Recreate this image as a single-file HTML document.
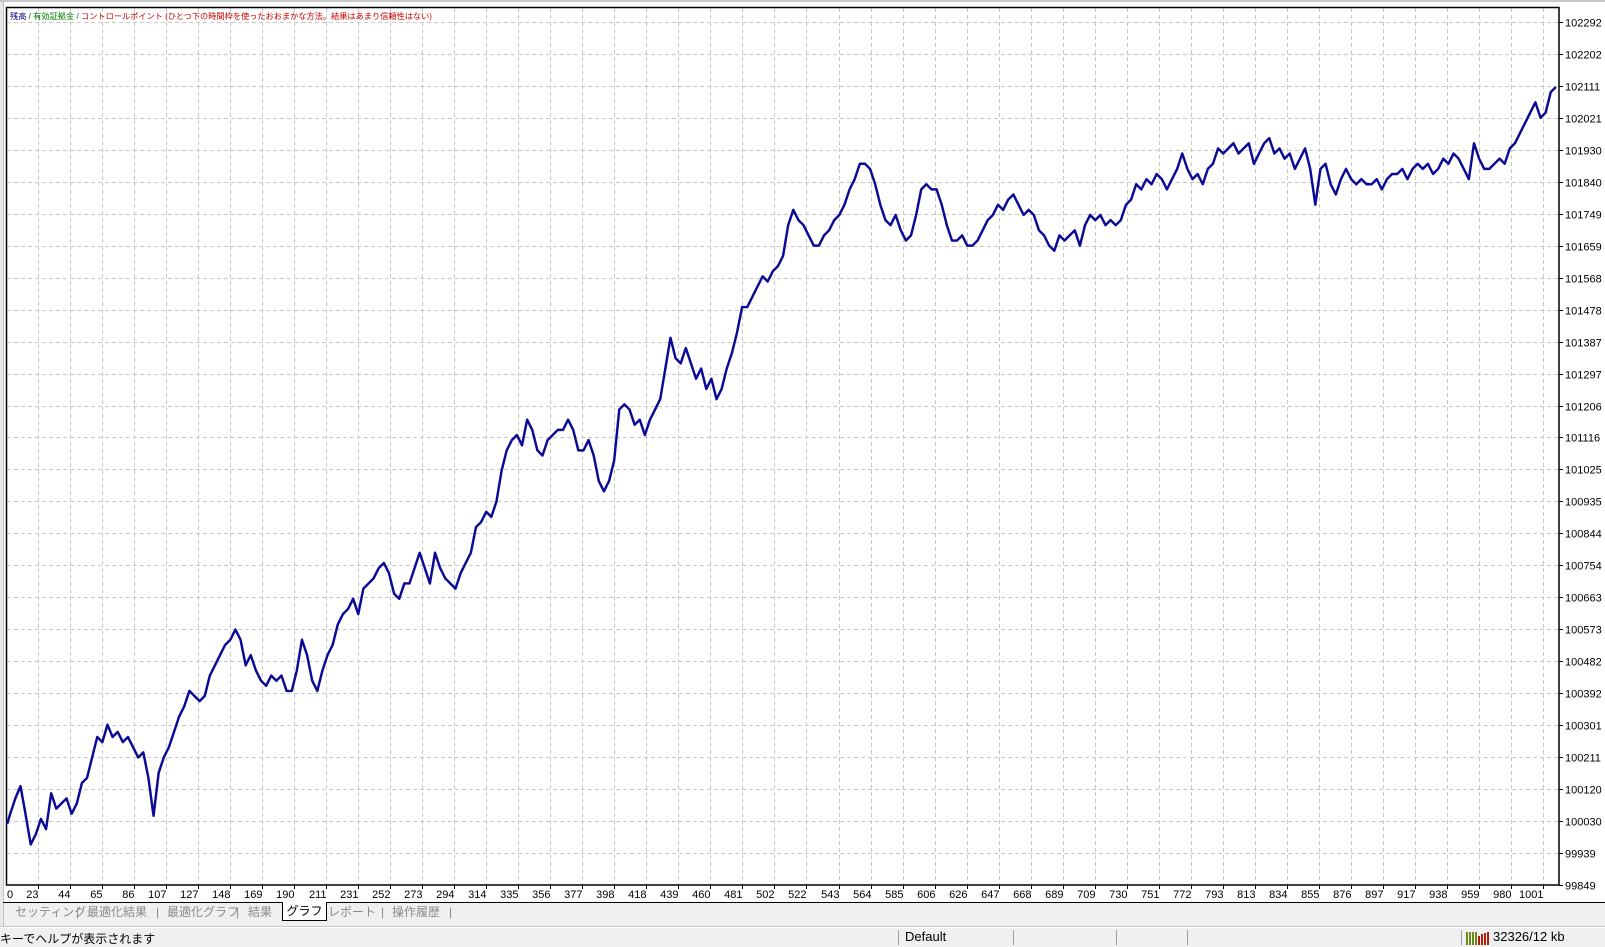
<!DOCTYPE html>
<html><head><meta charset="utf-8"><style>
html,body{margin:0;padding:0;width:1605px;height:945px;overflow:hidden;background:#f0f0f0;font-family:"Liberation Sans","Noto Sans CJK JP",sans-serif;}
.a{position:absolute;white-space:nowrap}
</style></head><body>
<div class="a" style="left:0;top:0;width:1605px;height:903px;background:#fff;border-top:2px solid #c8c8c8;box-sizing:border-box"></div>
<div class="a" style="left:0;top:2px;width:3px;height:925px;background:#e8e8e8;border-right:1px solid #c0c0c0"></div>
<svg class="a" style="left:0;top:0" width="1605" height="945" xmlns="http://www.w3.org/2000/svg" font-family="Liberation Sans, sans-serif" font-size="11">
<g id="grid" stroke="#c8c8c8" stroke-dasharray="4,3" stroke-width="1"></g>
<rect x="6.5" y="7.5" width="1552.5" height="877.5" fill="none" stroke="#000" stroke-width="1.5"/>
<g transform="scale(1.0236)">
<polyline fill="none" stroke="#0a0a96" stroke-width="2.4" stroke-linejoin="round" points="7,805 10,795 15,780 20,768 24,790 30,825 35,815 40,800 45,810 50,775 55,790 60,785 65,780 70,795 75,785 80,765 85,760 90,740 95,720 100,725 105,708 110,720 115,715 120,725 125,720 130,730 135,740 140,735 145,760 150,797 155,755 160,740 165,730 170,715 175,700 180,690 185,675 190,680 195,685 200,680 205,660 210,650 215,640 220,630 225,625 230,615 235,625 240,650 245,640 250,655 255,665 260,670 265,660 270,665 275,660 280,675 285,675 290,655 295,625 300,640 305,665 310,675 315,655 320,640 325,630 330,610 335,600 340,595 345,585 350,600 355,575 360,570 365,565 370,555 375,550 380,560 385,580 390,585 395,570 400,570 405,555 410,540 415,555 420,570 425,540 430,555 435,565 440,570 445,575 450,560 455,550 460,540 465,515 470,510 475,500 480,505 485,490 490,460 495,440 500,430 505,425 510,435 515,410 520,420 525,440 530,445 535,430 540,425 545,420 550,420 555,410 560,420 565,440 570,440 575,430 580,445 585,470 590,480 595,470 600,450 605,400 610,395 615,400 620,415 625,410 630,425 635,410 640,400 645,390 650,360 655,330 660,350 665,355 670,340 675,355 680,370 685,360 690,380 695,370 700,390 705,380 710,360 715,345 720,325 725,300 730,300 735,290 740,280 745,270 750,275 755,265 760,260 765,250 770,220 775,205 780,215 785,220 790,230 795,240 800,240 805,230 810,225 815,215 820,210 825,200 830,185 835,175 840,160 845,160 850,165 855,180 860,200 865,215 870,220 875,210 880,225 885,235 890,230 895,210 900,185 905,180 910,185 915,185 920,200 925,220 930,235 935,235 940,230 945,240 950,240 955,235 960,225 965,215 970,210 975,200 980,205 985,195 990,190 995,200 1000,210 1005,205 1010,210 1015,225 1020,230 1025,240 1030,245 1035,230 1040,235 1045,230 1050,225 1055,240 1060,220 1065,210 1070,215 1075,210 1080,220 1085,215 1090,220 1095,215 1100,200 1105,195 1110,180 1115,185 1120,175 1125,180 1130,170 1135,175 1140,185 1145,175 1150,165 1155,150 1160,165 1165,175 1170,170 1175,180 1180,165 1185,160 1190,145 1195,150 1200,145 1205,140 1210,150 1215,145 1220,140 1225,160 1230,150 1235,140 1240,135 1245,150 1250,145 1255,155 1260,150 1265,165 1270,155 1275,145 1280,165 1285,200 1290,165 1295,160 1300,180 1305,190 1310,175 1315,165 1320,175 1325,180 1330,175 1335,180 1340,180 1345,175 1350,185 1355,175 1360,170 1365,170 1370,165 1375,175 1380,165 1385,160 1390,165 1395,160 1400,170 1405,165 1410,155 1415,160 1420,150 1425,155 1430,165 1435,175 1440,140 1445,155 1450,165 1455,165 1460,160 1465,155 1470,160 1475,145 1480,140 1485,130 1490,120 1495,110 1500,100 1505,115 1510,110 1515,90 1520,85"/>
</g>
<g id="labels" fill="#000"></g>
<text x="10" y="19" font-size="8.2" font-family="Liberation Sans, Noto Sans CJK JP, sans-serif"><tspan fill="#00008b">残高</tspan><tspan fill="#333"> / </tspan><tspan fill="#008000">有効証拠金</tspan><tspan fill="#333"> / </tspan><tspan fill="#d00000">コントロールポイント (ひとつ下の時間枠を使ったおおまかな方法。結果はあまり信頼性はない)</tspan></text>
</svg>
<script>
(function(){
var ns="http://www.w3.org/2000/svg",g=document.getElementById('grid'),L=document.getElementById('labels');
function el(p,t,a){var e=document.createElementNS(ns,t);for(var k in a)e.setAttribute(k,a[k]);p.appendChild(e);return e;}
var yv=[102292,102202,102111,102021,101930,101840,101749,101659,101568,101478,101387,101297,101206,101116,101025,100935,100844,100754,100663,100573,100482,100392,100301,100211,100120,100030,99939,99849];
for(var i=0;i<yv.length;i++){var y=Math.round(22+31.96*i)+0.5;
 if(i<yv.length-1)el(g,'line',{x1:7,x2:1558,y1:y,y2:y});
 el(L,'line',{x1:1559,x2:1563,y1:y,y2:y,stroke:'#000'});
 var t=el(L,'text',{x:1565,y:y+4});t.textContent=yv[i];}
var xv=[23,44,65,86,107,127,148,169,190,211,231,252,273,294,314,335,356,377,398,418,439,460,481,502,522,543,564,585,606,626,647,668,689,709,730,751,772,793,813,834,855,876,897,917,938,959,980,1001];
var t0=el(L,'text',{x:7,y:898});t0.textContent='0';
for(var j=0;j<xv.length;j++){var x=Math.round(38+32.02*j)+0.5;
 el(g,'line',{x1:x,x2:x,y1:8,y2:884});
 el(L,'line',{x1:x,x2:x,y1:885,y2:889,stroke:'#000'});
 var t=el(L,'text',{x:x,y:898,'text-anchor':'end'});t.textContent=xv[j];}
})();
</script>
<div class="a" style="left:3px;top:902px;width:1602px;height:1px;background:#000"></div>
<div class="a" style="left:0;top:904px;font-size:12px;color:#8a8a8a;line-height:17px">
<span class="a" style="left:15px">セッティング</span><span class="a" style="left:76px">|</span>
<span class="a" style="left:87px">最適化結果</span><span class="a" style="left:156px">|</span>
<span class="a" style="left:167px">最適化グラフ</span><span class="a" style="left:236px">|</span>
<span class="a" style="left:248px">結果</span>
<span class="a" style="left:282px;top:-2px;width:43px;height:18px;background:#fff;border:1px solid #000;border-top:none;color:#000;text-align:center;line-height:18px">グラフ</span>
<span class="a" style="left:328px">レポート</span><span class="a" style="left:381px">|</span>
<span class="a" style="left:392px">操作履歴</span><span class="a" style="left:449px">|</span>
</div>
<div class="a" style="left:0;top:926px;width:1605px;height:1px;background:#c8c8c8"></div>
<div class="a" style="left:0;top:927px;width:1605px;height:1px;background:#fff"></div>
<div class="a" style="left:0;top:930px;font-size:12px;color:#000">キーでヘルプが表示されます</div>
<div class="a" style="left:898px;top:930px;width:1px;height:15px;background:#a0a0a0"></div>
<div class="a" style="left:905px;top:929px;font-size:13px">Default</div>
<div class="a" style="left:1013px;top:930px;width:1px;height:15px;background:#a0a0a0"></div>
<div class="a" style="left:1116px;top:930px;width:1px;height:15px;background:#a0a0a0"></div>
<div class="a" style="left:1187px;top:930px;width:1px;height:15px;background:#a0a0a0"></div>
<div class="a" style="left:1461px;top:930px;width:1px;height:15px;background:#a0a0a0"></div>
<svg class="a" style="left:1466px;top:932px" width="24" height="13"><g stroke-width="2"><path d="M1 0V13M4 0V13M7 0V13M10 0V13" stroke="#6a8a1a"/><path d="M13 4V13M16 2V13M19 1V13M22 0V13" stroke="#b02010"/></g></svg>
<div class="a" style="left:1493px;top:929px;font-size:13px">32326/12 kb</div>
</body></html>
